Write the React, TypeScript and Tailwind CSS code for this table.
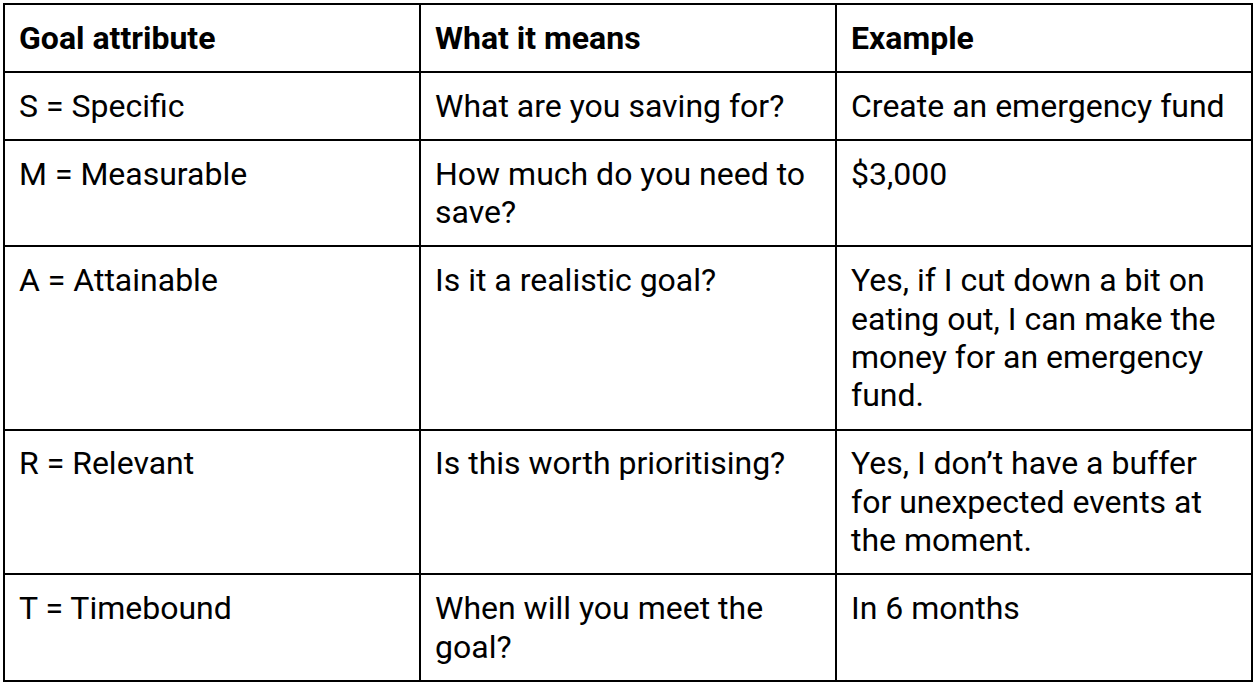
import React from "react";

const rows: [string, string, string][] = [
  ["S = Specific", "What are you saving for?", "Create an emergency fund"],
  ["M = Measurable", "How much do you need to save?", "$3,000"],
  [
    "A = Attainable",
    "Is it a realistic goal?",
    "Yes, if I cut down a bit on eating out, I can make the money for an emergency fund.",
  ],
  [
    "R = Relevant",
    "Is this worth prioritising?",
    "Yes, I don\u2019t have a buffer for unexpected events at the moment.",
  ],
  ["T = Timebound", "When will you meet the goal?", "In 6 months"],
];

export default function App() {
  return (
    <div
      className="w-[1258px] h-[688px] bg-white p-[3px] text-black"
      style={{ fontFamily: "Roboto, 'Noto Sans', sans-serif" }}
    >
      <table className="w-[1250px] table-fixed border-collapse border-2 border-black text-[32px] leading-[38.4px]">
        <colgroup>
          <col className="w-1/3" />
          <col className="w-1/3" />
          <col className="w-1/3" />
        </colgroup>
        <thead>
          <tr>
            <th className="border-2 border-black text-left align-top font-bold px-[14px] py-[13.8px]">
              Goal attribute
            </th>
            <th className="border-2 border-black text-left align-top font-bold px-[14px] py-[13.8px]">
              What it means
            </th>
            <th className="border-2 border-black text-left align-top font-bold px-[14px] py-[13.8px]">
              Example
            </th>
          </tr>
        </thead>
        <tbody>
          {rows.map((r, i) => (
            <tr key={i}>
              {r.map((c, j) => (
                <td
                  key={j}
                  className="border-2 border-black align-top px-[14px] py-[13.8px]"
                >
                  {c}
                </td>
              ))}
            </tr>
          ))}
        </tbody>
      </table>
    </div>
  );
}
